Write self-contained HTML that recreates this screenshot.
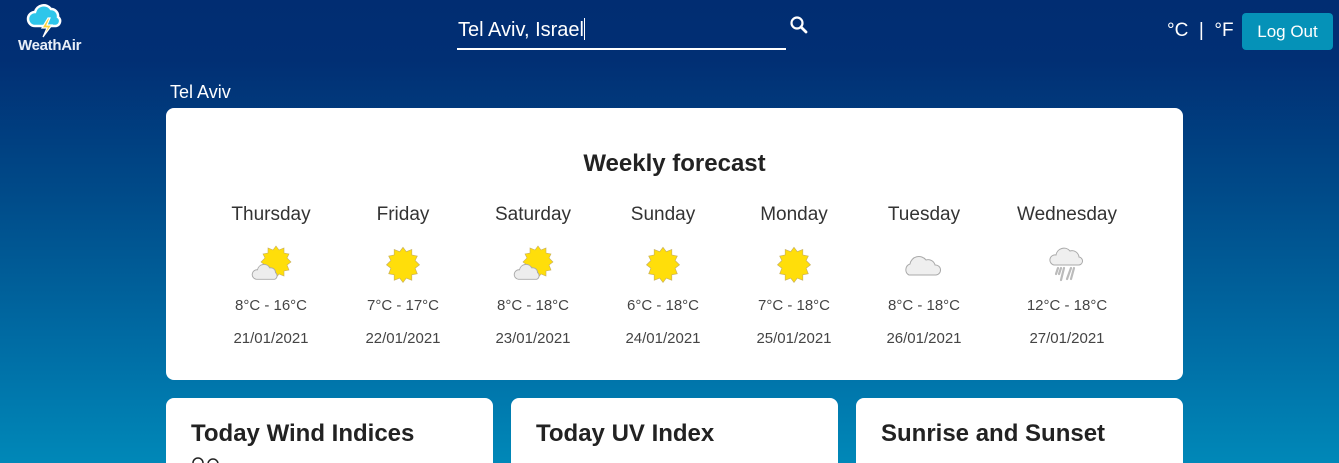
<!DOCTYPE html>
<html style="width:1339px;height:463px;overflow:hidden;background:#0088b8"><head><meta charset="utf-8"><style>
*{margin:0;padding:0;box-sizing:border-box}
body{width:1339px;height:463px;overflow:hidden;font-family:"Liberation Sans",sans-serif;background:linear-gradient(to bottom,#012d72 0px,#012f74 60px,#004c8a 200px,#0070a7 360px,#0088b8 463px);position:relative;color:#222}
.abs{position:absolute}
.card{position:absolute;background:#fff;border-radius:8px}
.day{position:absolute;top:203px;width:140px;margin-left:-70px;text-align:center;color:#333}
.day .n{font-size:19px;height:24px;line-height:24px}
.day .ic{height:64px;position:relative}
.day .ic svg{position:absolute;left:50%;top:16px;margin-left:-22px}
.day .t{font-size:15px;color:#444;margin-top:6px;line-height:17px}
.day .d{font-size:15px;color:#444;margin-top:16px;line-height:17px}
.h{font-weight:bold;font-size:24px;color:#222}
</style></head><body>
<svg class="abs" style="left:26px;top:4px" width="44" height="36" viewBox="0 0 44 36">
<path d="M9 22a7 7 0 0 1 0-14 9 9 0 0 1 16-3 7 7 0 0 1 7 8 5 5 0 0 1-2 9z" fill="#2ec6ea" stroke="#fff" stroke-width="2.5"/>
<path d="M22 14l-6 10h5l-4 9 9-12h-5l3-7z" fill="#ffd23a" stroke="#fff" stroke-width="1.2"/>
</svg>
<div class="abs" style="left:18px;top:37px;color:#e8eef8;font-weight:bold;font-size:15px;letter-spacing:-0.3px">WeathAir</div>
<div class="abs" style="left:458px;top:18px;color:#fff;font-size:20px">Tel Aviv, Israel<span style="display:inline-block;width:1.5px;height:22px;background:#fff;vertical-align:-4px"></span></div>
<div class="abs" style="left:457px;top:48px;width:329px;height:2px;background:#fff"></div>
<svg class="abs" style="left:789px;top:15px" width="20" height="20" viewBox="0 0 20 20"><circle cx="8" cy="8" r="5.5" fill="none" stroke="#fff" stroke-width="2.2"/><path d="M12 12l5 5" stroke="#fff" stroke-width="2.8" stroke-linecap="round"/></svg>
<div class="abs" style="left:1167px;top:20px;color:#fff;font-size:19px">°C &nbsp;|&nbsp; °F</div>
<div class="abs" style="left:1242px;top:13px;width:91px;height:37px;background:#0592b8;border-radius:4px;color:#fff;font-size:17px;text-align:center;line-height:37px">Log Out</div>
<div class="abs" style="left:170px;top:82px;color:#fff;font-size:18px">Tel Aviv</div>
<div class="card" style="left:166px;top:108px;width:1017px;height:272px"></div>
<div class="abs h" style="left:166px;width:1017px;top:150px;text-align:center">Weekly forecast</div>
<svg width="0" height="0" style="position:absolute"><defs>
<g id="sun"><polygon points="22,3 25,7 30,5 30,10 35,11 33,15 37,19 33,22 35,27 30,28 30,33 25,31 22,35 19,31 14,33 14,28 9,27 11,22 7,19 11,15 9,11 14,10 14,5 19,7" fill="#ffde0a" stroke="#c8b060" stroke-width="0.6"/></g>
<g id="cloud"><path d="M10 34a5 5 0 0 1 1-10 7 7 0 0 1 13-2 5 5 0 0 1 6 5 4 4 0 0 1-1 7z" fill="#ededed" stroke="#aaa" stroke-width="1"/></g>
</defs></svg>
<div class="day" style="left:271px"><div class="n">Thursday</div><div class="ic"><svg width="44" height="44"><use href="#sun" transform="translate(5,0)"/><use href="#cloud" transform="translate(-2,4) scale(0.95)"/></svg></div><div class="t">8°C - 16°C</div><div class="d">21/01/2021</div></div>
<div class="day" style="left:403px"><div class="n">Friday</div><div class="ic"><svg width="44" height="44"><use href="#sun" transform="translate(-2.2,1) scale(1.1)"/></svg></div><div class="t">7°C - 17°C</div><div class="d">22/01/2021</div></div>
<div class="day" style="left:533px"><div class="n">Saturday</div><div class="ic"><svg width="44" height="44"><use href="#sun" transform="translate(5,0)"/><use href="#cloud" transform="translate(-2,4) scale(0.95)"/></svg></div><div class="t">8°C - 18°C</div><div class="d">23/01/2021</div></div>
<div class="day" style="left:663px"><div class="n">Sunday</div><div class="ic"><svg width="44" height="44"><use href="#sun" transform="translate(-2.2,1) scale(1.1)"/></svg></div><div class="t">6°C - 18°C</div><div class="d">24/01/2021</div></div>
<div class="day" style="left:794px"><div class="n">Monday</div><div class="ic"><svg width="44" height="44"><use href="#sun" transform="translate(-2.2,1) scale(1.1)"/></svg></div><div class="t">7°C - 18°C</div><div class="d">25/01/2021</div></div>
<div class="day" style="left:924px"><div class="n">Tuesday</div><div class="ic"><svg width="44" height="44"><path d="M7 32a6 6 0 0 1 1-11 9 9 0 0 1 16-4 7 7 0 0 1 9 5 5 5 0 0 1 1 10z" fill="#efefef" stroke="#aaa" stroke-width="1"/></svg></div><div class="t">8°C - 18°C</div><div class="d">26/01/2021</div></div>
<div class="day" style="left:1067px"><div class="n">Wednesday</div><div class="ic"><svg width="44" height="44"><path d="M9 22a5 5 0 0 1 2-10 8 8 0 0 1 14-4 7 7 0 0 1 9 6 4 4 0 0 1-1 8z" fill="#efefef" stroke="#aaa" stroke-width="1"/><path d="M13 25l-2 6M16 25l-2 6M19 25l-3 12M26 25l-4 11M29 25l-3 11" stroke="#bbb" stroke-width="2.2" stroke-linecap="round"/></svg></div><div class="t">12°C - 18°C</div><div class="d">27/01/2021</div></div>
<div class="card" style="left:166px;top:398px;width:327px;height:65px;border-radius:8px 8px 0 0"></div>
<div class="card" style="left:511px;top:398px;width:327px;height:65px;border-radius:8px 8px 0 0"></div>
<div class="card" style="left:856px;top:398px;width:327px;height:65px;border-radius:8px 8px 0 0"></div>
<div class="abs h" style="left:191px;top:420px">Today Wind Indices</div>
<div class="abs h" style="left:536px;top:420px">Today UV Index</div>
<div class="abs h" style="left:881px;top:420px">Sunrise and Sunset</div>
<svg class="abs" style="left:190px;top:455px" width="40" height="8"><circle cx="8" cy="8" r="5" fill="none" stroke="#222" stroke-width="1.5"/><circle cx="23" cy="9" r="5" fill="none" stroke="#222" stroke-width="1.5"/></svg>
</body></html>
